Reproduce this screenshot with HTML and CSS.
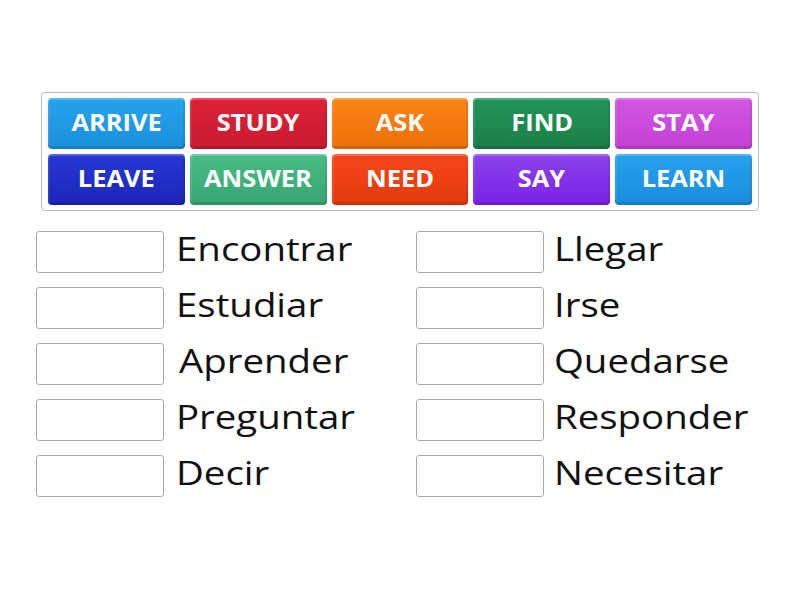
FILE: index.html
```html
<!DOCTYPE html>
<html>
<head>
<meta charset="utf-8">
<link rel="stylesheet" href="styles.css">
</head>
<body>
<div class="bank">
  <div class="tile c-arrive"><span class="word">ARRIVE</span></div>
  <div class="tile c-study"><span class="word">STUDY</span></div>
  <div class="tile c-ask"><span class="word">ASK</span></div>
  <div class="tile c-find"><span class="word">FIND</span></div>
  <div class="tile c-stay"><span class="word">STAY</span></div>
  <div class="tile c-leave"><span class="word">LEAVE</span></div>
  <div class="tile c-answer"><span class="word">ANSWER</span></div>
  <div class="tile c-need"><span class="word">NEED</span></div>
  <div class="tile c-say"><span class="word">SAY</span></div>
  <div class="tile c-learn"><span class="word">LEARN</span></div>
</div>
<div class="answers">
  <div class="col">
    <div class="row"><div class="slot"></div><span class="label">Encontrar</span></div>
    <div class="row"><div class="slot"></div><span class="label">Estudiar</span></div>
    <div class="row"><div class="slot"></div><span class="label shift">Aprender</span></div>
    <div class="row"><div class="slot"></div><span class="label">Preguntar</span></div>
    <div class="row"><div class="slot"></div><span class="label">Decir</span></div>
  </div>
  <div class="col col-right">
    <div class="row"><div class="slot"></div><span class="label">Llegar</span></div>
    <div class="row"><div class="slot"></div><span class="label">Irse</span></div>
    <div class="row"><div class="slot"></div><span class="label">Quedarse</span></div>
    <div class="row"><div class="slot"></div><span class="label">Responder</span></div>
    <div class="row"><div class="slot"></div><span class="label">Necesitar</span></div>
  </div>
</div>
</body>
</html>
```
FILE: styles.css
```css
html, body {
  margin: 0;
  padding: 0;
  background: #ffffff;
  font-family: "Open Sans", "Noto Sans", sans-serif;
}

.bank {
  box-sizing: border-box;
  width: 718px;
  margin: 92px 0 0 41px;
  padding: 5px 6px;
  border: 1px solid #b9b9b9;
  border-radius: 4px;
  display: grid;
  grid-template-columns: repeat(5, 1fr);
  grid-auto-rows: 51px;
  column-gap: 5px;
  row-gap: 5px;
}

.tile {
  box-sizing: border-box;
  border-radius: 4px;
  color: #ffffff;
  font-weight: 700;
  font-size: 24px;
  display: flex;
  align-items: center;
  justify-content: center;
  padding-bottom: 5px;
  box-shadow: inset 0 2px 0 rgba(255,255,255,0.22), inset 0 -3px 0 rgba(0,0,0,0.12), inset 2px 0 0 rgba(255,255,255,0.08), inset -2px 0 0 rgba(0,0,0,0.06);
}

.word {
  display: inline-block;
  transform: scaleX(1.06);
}

.c-arrive { background: linear-gradient(#26a3ee, #1a8fdc); }
.c-study  { background: linear-gradient(#de2238, #c81a2e); }
.c-ask    { background: linear-gradient(#fb8417, #ee7008); }
.c-find   { background: linear-gradient(#23955a, #1b7e46); }
.c-stay   { background: linear-gradient(#d456e2, #c240d4); }
.c-leave  { background: linear-gradient(#2538d4, #1d26b8); }
.c-answer { background: linear-gradient(#48bd86, #37a672); }
.c-need   { background: linear-gradient(#f7461a, #e43a0c); }
.c-say    { background: linear-gradient(#8b42ea, #7a22e6); }
.c-learn  { background: linear-gradient(#27a1ee, #1a8ddc); }

.answers {
  display: grid;
  grid-template-columns: 380px 380px;
  margin: 20px 0 0 36px;
}

.col {
  display: flex;
  flex-direction: column;
  gap: 14px;
}

.row {
  display: flex;
  align-items: flex-start;
  gap: 12px;
  height: 42px;
}

.col-right .row {
  gap: 10px;
}

.slot {
  box-sizing: border-box;
  width: 128px;
  height: 42px;
  flex: none;
  border: 1px solid #a9a9a9;
  border-radius: 3px;
  background: #ffffff;
}

.label {
  display: inline-block;
  font-size: 32px;
  line-height: 36px;
  color: #111111;
  white-space: nowrap;
  transform: scaleX(1.2);
  transform-origin: left center;
}

.label.shift {
  margin-left: 3px;
}
```
